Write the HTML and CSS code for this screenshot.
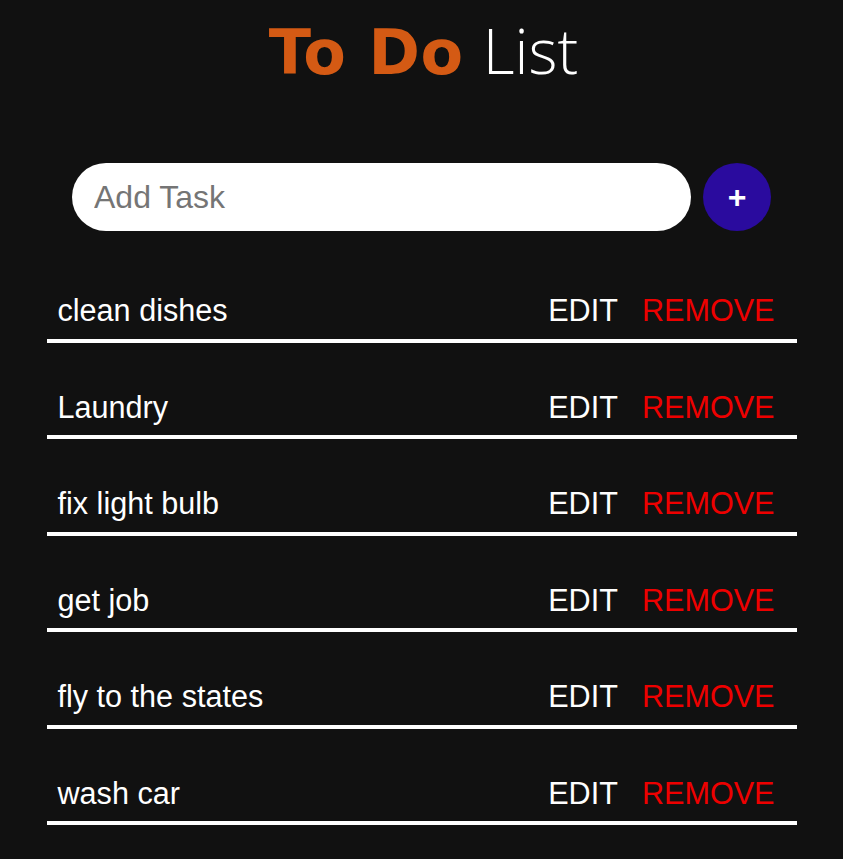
FILE: index.html
```html
<!DOCTYPE html>
<html lang="en">
<head>
<meta charset="utf-8">
<title>To Do List</title>
<link rel="stylesheet" href="styles.css">
</head>
<body>
<div class="app">
  <h1 class="title"><span class="title-bold">To Do</span> <span class="title-light">List</span></h1>
  <form class="add-form">
    <input class="add-input" type="text" placeholder="Add Task">
    <button class="add-btn" type="button">+</button>
  </form>
  <ul class="tasks">
    <li class="task"><span class="task-name">clean dishes</span><span class="actions"><span class="edit">EDIT</span><span class="remove">REMOVE</span></span></li>
    <li class="task"><span class="task-name">Laundry</span><span class="actions"><span class="edit">EDIT</span><span class="remove">REMOVE</span></span></li>
    <li class="task"><span class="task-name">fix light bulb</span><span class="actions"><span class="edit">EDIT</span><span class="remove">REMOVE</span></span></li>
    <li class="task"><span class="task-name">get job</span><span class="actions"><span class="edit">EDIT</span><span class="remove">REMOVE</span></span></li>
    <li class="task"><span class="task-name">fly to the states</span><span class="actions"><span class="edit">EDIT</span><span class="remove">REMOVE</span></span></li>
    <li class="task"><span class="task-name">wash car</span><span class="actions"><span class="edit">EDIT</span><span class="remove">REMOVE</span></span></li>
  </ul>
</div>
</body>
</html>
```
FILE: styles.css
```css
html, body {
  margin: 0;
  padding: 0;
  background: #111111;
}
body {
  font-family: "Liberation Sans", Arial, sans-serif;
  color: #ffffff;
}
.app {
  width: 750px;
  margin: 0 auto;
}
.title {
  margin: 0;
  padding-top: 12px;
  text-align: center;
  font-size: 62px;
  line-height: 76px;
  font-weight: normal;
}
.title-bold {
  font-family: "DejaVu Sans", sans-serif;
  font-weight: 700;
  color: #d45a14;
  letter-spacing: 0.5px;
  margin-left: 4px;
}
.title-light {
  font-family: "Open Sans", sans-serif;
  font-weight: 300;
  color: #ffffff;
  margin-left: 2px;
}
.add-form {
  display: flex;
  justify-content: center;
  gap: 12px;
  margin-top: 72px;
}
.add-input {
  width: 619px;
  height: 68px;
  box-sizing: border-box;
  border: none;
  border-radius: 34px;
  padding: 0 22px;
  font-family: "Liberation Sans", Arial, sans-serif;
  font-size: 32px;
  color: #333;
  background: #ffffff;
  outline: none;
}
.add-input::placeholder {
  color: #757575;
}
.add-btn {
  width: 68px;
  height: 68px;
  border: none;
  border-radius: 50%;
  background: #2a0b9e;
  color: #ffffff;
  font-family: "Liberation Sans", Arial, sans-serif;
  font-size: 32px;
  font-weight: 700;
  padding: 0;
  display: flex;
  align-items: center;
  justify-content: center;
}
.tasks {
  list-style: none;
  margin: 0;
  padding: 15px 0 0;
}
.task {
  display: flex;
  justify-content: space-between;
  align-items: center;
  margin-top: 30px;
  padding: 17px 22px 11px 11px;
  border-bottom: 4px solid #ffffff;
  font-size: 30.6px;
  line-height: 34.5px;
}
.actions {
  display: flex;
  gap: 24px;
}
.edit {
  color: #ffffff;
}
.remove {
  color: #ee0000;
}
```
